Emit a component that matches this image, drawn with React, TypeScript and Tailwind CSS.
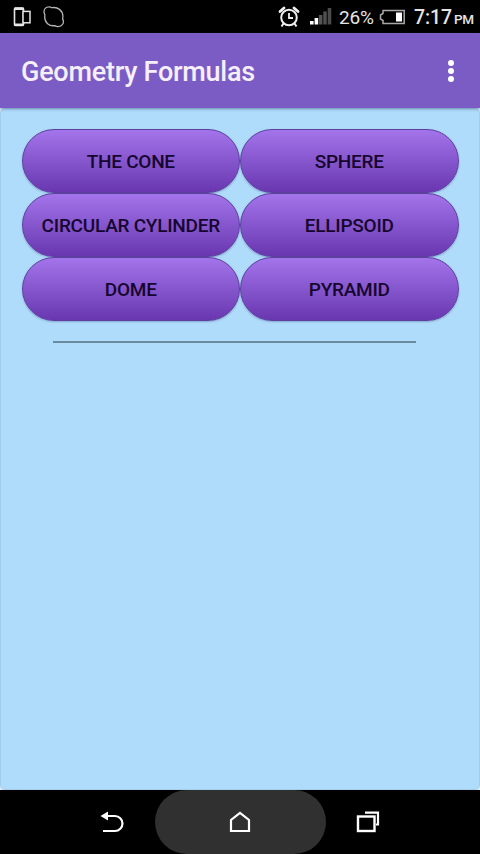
const shapes = ["THE CONE", "SPHERE", "CIRCULAR CYLINDER", "ELLIPSOID", "DOME", "PYRAMID"];

const DevicesIcon = () => (
  <svg width="18" height="20" viewBox="0 0 18 20" fill="none" stroke="#e6e6e6">
    <rect x="1.500" y="1" width="9" height="17.500" rx="1" strokeWidth="1.600" />
    <path d="M1.500 1.800h9M1.500 17.700h9" strokeWidth="2.400" />
    <rect x="10" y="4.400" width="7" height="11.400" fill="#000" strokeWidth="1.500" />
  </svg>
);

const SkypeIcon = () => (
  <svg width="22" height="22" viewBox="0 0 22 22" fill="none" stroke="#b4b4b4" strokeWidth="1.300">
    <path d="M1 5.500C1 2.800 3.200 .8 6 .8c1.200 0 2 .4 2.800 .9C14.800 .5 19.600 4.600 19.900 10c0 1-.1 2-.3 2.800 2.200 4-.5 8-4.800 7.800-1.200 0-2-.3-3-1C6 20.500 1.700 16.500 1.700 11c0-.8 0-1.400.2-2.200C1.300 7.800 1 6.700 1 5.500z" />
  </svg>
);

const AlarmIcon = () => (
  <svg width="22" height="22" viewBox="0 0 22 22" fill="none" stroke="#f0f0f0" strokeWidth="2">
    <circle cx="11" cy="11.500" r="7.800" />
    <path d="M11 7v5h4" strokeWidth="1.800" />
    <path d="M2 5.500l4-3.500M20 5.500l-4-3.500" strokeWidth="2.800" strokeLinecap="round" />
    <path d="M5.500 17.500L3.500 20.500M16.500 17.500l2 3" />
  </svg>
);

const SignalIcon = () => (
  <svg width="22" height="17" viewBox="0 0 22 17">
    <rect x="0" y="13" width="3.600" height="3.500" fill="#fff" />
    <rect x="4.600" y="10" width="3.600" height="6.500" fill="#fff" />
    <rect x="9" y="7" width="3.400" height="9.500" fill="#555" />
    <rect x="13.300" y="3.500" width="3.400" height="13" fill="#505050" />
    <rect x="17.700" y="0" width="3.600" height="16.500" fill="#4b4b4b" />
  </svg>
);

const BatteryIcon = () => (
  <svg width="27" height="16" viewBox="0 0 27 16" fill="none">
    <path d="M4 1.500H25.200V14.500H4V11.500L1.500 10V6L4 4.500z" stroke="#a8a8a8" strokeWidth="1.500" />
    <rect x="17" y="3.500" width="6" height="9" fill="#fff" />
  </svg>
);

const StatusBar = () => (
  <div className="flex h-[33px] shrink-0 items-center bg-black text-[#e4e4e4]">
    <div className="ml-[13px] flex items-center gap-[12px]">
      <DevicesIcon />
      <SkypeIcon />
    </div>
    <div className="ml-auto flex items-center pr-[6px]">
      <AlarmIcon />
      <div className="ml-[10px]">
        <SignalIcon />
      </div>
      <span className="ml-[7px] w-[35px] whitespace-nowrap pt-[2px] text-[19px] leading-none tracking-[-0.200px]">26%</span>
      <div className="ml-[5px]">
        <BatteryIcon />
      </div>
      <span className="ml-[8px] w-[40px] whitespace-nowrap pt-[2px] text-[19.500px] leading-none font-medium tracking-[-0.100px]">7:17</span>
      <span className="w-[20px] whitespace-nowrap pt-[6px] text-[13.500px] leading-none font-medium tracking-[-0.300px]">PM</span>
    </div>
  </div>
);

const AppBar = () => (
  <header className="relative z-10 flex h-[75px] shrink-0 items-center justify-between bg-[#7b5cc4] pl-[21px] pr-[26px] shadow-[0_1px_3px_rgba(40,60,100,0.450)]">
    <h1 className="pt-[3px] text-[27px] font-medium tracking-[-0.250px] text-[#f6effc]">Geometry Formulas</h1>
    <button aria-label="More options" className="flex flex-col gap-[2px]">
      <span className="size-[6px] rounded-full bg-white" />
      <span className="size-[6px] rounded-full bg-white" />
      <span className="size-[6px] rounded-full bg-white" />
    </button>
  </header>
);

const NavBar = () => (
  <nav className="flex h-[64px] shrink-0 items-center justify-center bg-black">
    <button aria-label="Back" className="flex h-full w-[85px] items-center justify-center">
      <svg width="24" height="22" viewBox="0 0 24 22" fill="none">
        <path d="M6 5H15a7.500 7.500 0 0 1 0 15H3" stroke="#fff" strokeWidth="2.200" />
        <path d="M0.500 5L8 0.500V9.500z" fill="#fff" />
      </svg>
    </button>
    <button aria-label="Home" className="flex h-full w-[171px] items-center justify-center rounded-full bg-[#303030]">
      <svg width="22" height="22" viewBox="0 0 22 22" fill="none" stroke="#fff" strokeWidth="2.200">
        <path d="M2 20V9L11 1.800L20 9V20z" />
      </svg>
    </button>
    <button aria-label="Recent apps" className="flex h-full w-[85px] items-center justify-center">
      <svg width="24" height="22" viewBox="0 0 24 22" fill="none" stroke="#fff">
        <rect x="2" y="5.500" width="16.500" height="14.500" strokeWidth="2.400" />
        <path d="M9 1.700H22V13.500H20" strokeWidth="2.200" />
      </svg>
    </button>
  </nav>
);

export default function App() {
  return (
    <div className="flex h-[854px] w-[480px] flex-col overflow-hidden bg-black font-[Roboto,sans-serif]">
      <StatusBar />
      <AppBar />
      <main className="flex-1 bg-[#dceefa]">
        <div className="h-full rounded-[5px] border border-[#a3cdea] bg-[#b0dcfb] px-[20.500px] pt-[20.300px]">
          <div className="grid grid-cols-2">
            {shapes.map((shape) => (
              <button
                key={shape}
                className="h-[64px] whitespace-nowrap rounded-full border border-[#5d3fa0] bg-linear-to-b from-[#a374ea] to-[#6937b0] pt-[2px] text-[19px] font-medium tracking-[-0.250px] text-[#16052f] shadow-[0_1px_2px_rgba(60,60,120,0.350)]"
              >
                {shape}
              </button>
            ))}
          </div>
          <div className="ml-[31.500px] mt-[19.700px] h-[2px] w-[363px] bg-[#6b8a9d]" />
        </div>
      </main>
      <NavBar />
    </div>
  );
}
